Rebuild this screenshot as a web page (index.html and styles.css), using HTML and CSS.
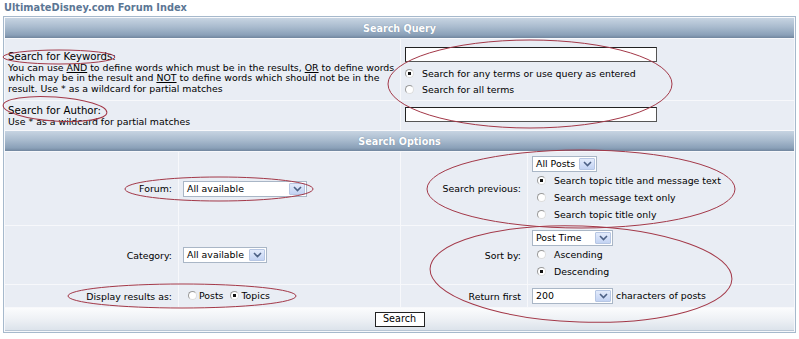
FILE: index.html
```html
<!DOCTYPE html>
<html lang="en">
<head>
    <meta charset="UTF-8">
    <title>Search</title>
    <link rel="stylesheet" href="styles.css">
</head>
<body>
<div class="page">
    <div class="nav"><a class="nav__link" href="#">UltimateDisney.com Forum Index</a></div>
    <table class="forumline">
        <colgroup>
            <col class="col-a">
            <col class="col-b">
            <col class="col-c">
            <col class="col-d">
        </colgroup>
        <tr class="head">
            <th colspan="4">Search Query</th>
        </tr>
        <tr class="row row--keywords">
            <td colspan="2" class="cell cell--info">
                <span class="gen">Search for Keywords:</span><br>
                You can use <u>AND</u> to define words which must be in the results, <u>OR</u> to define words<br>
                which may be in the result and <u>NOT</u> to define words which should not be in the<br>
                result. Use * as a wildcard for partial matches
            </td>
            <td colspan="2" class="cell cell--field">
                <input class="text" type="text">
                <label class="option"><input class="radio" type="radio" name="terms" checked> Search for any terms or use query as entered</label>
                <label class="option"><input class="radio" type="radio" name="terms"> Search for all terms</label>
            </td>
        </tr>
        <tr class="row row--author">
            <td colspan="2" class="cell cell--info">
                <span class="gen">Search for Author:</span><br>
                Use * as a wildcard for partial matches
            </td>
            <td colspan="2" class="cell cell--field">
                <input class="text" type="text">
            </td>
        </tr>
        <tr class="head">
            <th colspan="4">Search Options</th>
        </tr>
        <tr class="row row--forum">
            <td class="cell cell--label">Forum:</td>
            <td class="cell cell--value">
                <span class="select select--forum"><span class="select__value">All available</span><span class="select__btn"><svg width="9" height="6" viewBox="0 0 9 6"><path d="M1 1l3.5 3.5L8 1" fill="none" stroke="#4d6185" stroke-width="1.6"/></svg></span></span>
            </td>
            <td class="cell cell--label">Search previous:</td>
            <td class="cell cell--value cell--stack">
                <span class="select select--posts"><span class="select__value">All Posts</span><span class="select__btn"><svg width="9" height="6" viewBox="0 0 9 6"><path d="M1 1l3.5 3.5L8 1" fill="none" stroke="#4d6185" stroke-width="1.6"/></svg></span></span>
                <label class="option option--wide"><input class="radio" type="radio" name="fields" checked> Search topic title and message text</label>
                <label class="option option--wide"><input class="radio" type="radio" name="fields"> Search message text only</label>
                <label class="option option--wide"><input class="radio" type="radio" name="fields"> Search topic title only</label>
            </td>
        </tr>
        <tr class="row row--category">
            <td class="cell cell--label">Category:</td>
            <td class="cell cell--value">
                <span class="select select--cat"><span class="select__value">All available</span><span class="select__btn"><svg width="9" height="6" viewBox="0 0 9 6"><path d="M1 1l3.5 3.5L8 1" fill="none" stroke="#4d6185" stroke-width="1.6"/></svg></span></span>
            </td>
            <td class="cell cell--label">Sort by:</td>
            <td class="cell cell--value">
                <span class="select select--sort"><span class="select__value">Post Time</span><span class="select__btn"><svg width="9" height="6" viewBox="0 0 9 6"><path d="M1 1l3.5 3.5L8 1" fill="none" stroke="#4d6185" stroke-width="1.6"/></svg></span></span>
                <label class="option option--wide"><input class="radio" type="radio" name="sort"> Ascending</label>
                <label class="option option--wide"><input class="radio" type="radio" name="sort" checked> Descending</label>
            </td>
        </tr>
        <tr class="row row--display">
            <td class="cell cell--label">Display results as:</td>
            <td class="cell cell--value">
                <label class="inline"><input class="radio" type="radio" name="show"> Posts</label>
                <label class="inline"><input class="radio" type="radio" name="show" checked> Topics</label>
            </td>
            <td class="cell cell--label">Return first</td>
            <td class="cell cell--value">
                <span class="select select--chars"><span class="select__value">200</span><span class="select__btn"><svg width="9" height="6" viewBox="0 0 9 6"><path d="M1 1l3.5 3.5L8 1" fill="none" stroke="#4d6185" stroke-width="1.6"/></svg></span></span>
                characters of posts
            </td>
        </tr>
        <tr class="foot">
            <td colspan="4"><button class="button" type="button">Search</button></td>
        </tr>
    </table>

    <svg class="marks" width="799" height="339" viewBox="0 0 799 339">
        <ellipse cx="59" cy="57" rx="56" ry="7"/>
        <ellipse cx="55" cy="109" rx="52" ry="12" transform="rotate(4 55 109)"/>
        <ellipse cx="530" cy="84" rx="142" ry="44"/>
        <ellipse cx="219" cy="189" rx="94" ry="12"/>
        <ellipse cx="581" cy="189" rx="154" ry="39"/>
        <ellipse cx="581" cy="274" rx="151" ry="48" transform="rotate(2 581 274)"/>
        <ellipse cx="182" cy="296" rx="114" ry="12"/>
    </svg>
</div>
</body>
</html>
```

FILE: styles.css
```css
html,
body {
    margin: 0;
    padding: 0;
    background: #fff;
}

.page {
    position: relative;
    width: 799px;
    height: 339px;
    overflow: hidden;
    font-family: "DejaVu Sans", Verdana, sans-serif;
    font-size: 9.4px;
    color: #000;
}

.nav {
    height: 16px;
    padding-left: 4px;
    line-height: 15px;
}

.nav__link {
    color: #5b7694;
    font-weight: 700;
    font-size: 9.8px;
    text-decoration: none;
}

.forumline {
    margin-left: 3px;
    width: 793px;
    table-layout: fixed;
    border: 1px solid #a6b9cc;
    border-spacing: 1px;
    background: #f7f8fb;
}

.col-a { width: 173px; }
.col-b { width: 221px; }
.col-c { width: 126px; }
.col-d { width: 266px; }

.head {
    height: 20px;
}

.head th {
    padding: 0;
    color: #fff;
    font-size: 9.6px;
    font-weight: 700;
    text-align: center;
    text-shadow: 0 0 1px #6d829a;
    background: linear-gradient(#c7d4e2, #a9bbce 45%, #8aa0b8 85%, #71869e);
}

.cell {
    padding: 0;
    background: #e9edf4;
    vertical-align: middle;
    white-space: nowrap;
}

.cell--info {
    padding: 0 2px 0 3px;
    line-height: 10.6px;
    vertical-align: top;
}

.row--keywords { height: 61px; }
.row--author { height: 29px; }
.row--forum { height: 73px; }
.row--category { height: 58px; }
.row--display { height: 22px; }
.foot { height: 23px; }

.row--keywords .cell--info {
    padding-top: 13px;
}

.row--keywords .cell--field {
    vertical-align: top;
    padding-top: 8px;
}

.row--author .cell--info {
    padding-top: 5px;
}

.row--author .cell--field {
    vertical-align: top;
    padding-top: 6px;
}

.gen {
    font-size: 10.2px;
}

.cell--field {
    padding-left: 4px;
}

.cell--label {
    padding-right: 6px;
    text-align: right;
}

.cell--value {
    padding-left: 3px;
}

.cell--stack {
    padding-top: 2px;
}

.text {
    display: block;
    box-sizing: border-box;
    width: 252px;
    height: 15px;
    margin: 0 0 3px;
    padding: 0;
    border: 1px solid #222;
    border-right-color: #555;
    border-bottom-color: #555;
    background: #fff;
}

.option {
    display: flex;
    align-items: center;
    height: 16px;
    gap: 8px;
}

.option--wide {
    height: 17px;
    padding-left: 5px;
    gap: 8px;
}

.inline {
    display: inline-flex;
    align-items: center;
    gap: 2px;
    margin-left: 5px;
}

.inline + .inline {
    margin-left: 4px;
}

.radio {
    appearance: none;
    box-sizing: border-box;
    width: 9px;
    height: 9px;
    margin: 0;
    border: 1px solid #9a9a9a;
    border-right-color: #ddd;
    border-bottom-color: #ddd;
    border-radius: 50%;
    background: #fff;
}

.radio:checked {
    background: radial-gradient(circle, #111 0 1.6px, #fff 2px);
}

.select {
    display: inline-flex;
    align-items: stretch;
    box-sizing: border-box;
    height: 16px;
    border: 1px solid #a9b6c6;
    background: #fff;
    vertical-align: middle;
}

.select__value {
    flex: 1;
    padding-left: 3px;
    line-height: 14px;
}

.select__btn {
    display: flex;
    align-items: center;
    justify-content: center;
    width: 14px;
    margin: 1px;
    border: 1px solid #b6c6e3;
    border-radius: 1px;
    background: linear-gradient(#e3ebfb, #c3d3f3);
}

.select--forum { width: 124px; }
.select--cat { width: 84px; }
.select--posts { width: 65px; }
.select--sort { width: 81px; }
.select--chars { width: 81px; }

.row--forum .cell--value,
.row--category .cell--value,
.row--display .cell--value {
    padding-left: 4px;
}

.foot td {
    padding: 0;
    text-align: center;
    background: linear-gradient(#fbfcfd, #eef1f5 50%, #dce3eb);
    border-bottom: 1px solid #b8c6d5;
}

.button {
    height: 15px;
    width: 50px;
    padding: 0;
    border: 1px solid #222;
    background: #fff;
    font-family: inherit;
    font-size: 9.6px;
    line-height: 12px;
    vertical-align: middle;
}

.marks {
    position: absolute;
    top: 0;
    left: 0;
    pointer-events: none;
}

.marks ellipse {
    fill: none;
    stroke: #a33848;
    stroke-width: 1;
}
```
